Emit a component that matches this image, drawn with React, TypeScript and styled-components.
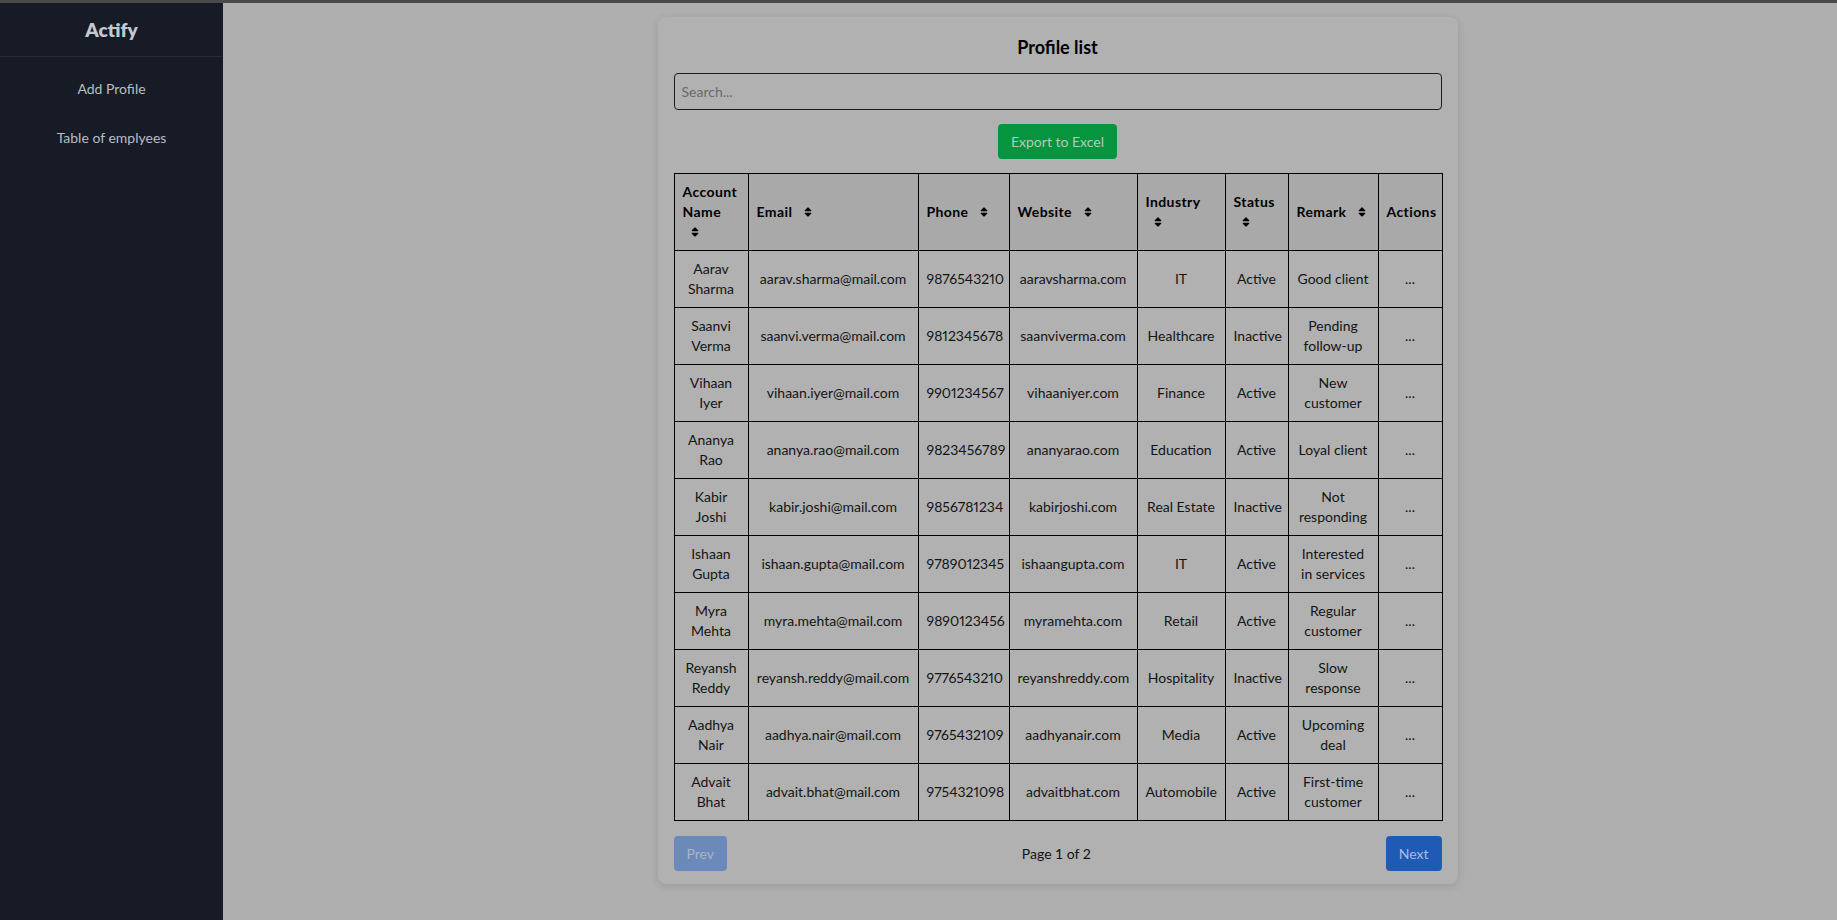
import React from "react";
import styled, { createGlobalStyle } from "styled-components";
import { FaSort } from "react-icons/fa";

const GlobalStyle = createGlobalStyle`
  html, body { margin: 0; padding: 0; }
  body {
    font-family: Lato, "Noto Sans", sans-serif;
    background: #afafaf;
    color: #111;
  }
  * { box-sizing: border-box; }
`;

const TopStrip = styled.div`
  height: 3px;
  background: #4a4a4a;
`;

const Layout = styled.div`
  display: flex;
  min-height: 917px;
`;

const Sidebar = styled.aside`
  width: 223px;
  flex-shrink: 0;
  background: #161b26;
  display: flex;
  flex-direction: column;
`;

const Brand = styled.div`
  height: 54px;
  display: flex;
  align-items: center;
  justify-content: center;
  font-size: 19px;
  font-weight: 800;
  color: #c5c8ce;
  border-bottom: 1px solid #272d38;
`;

const NavList = styled.nav`
  display: flex;
  flex-direction: column;
  align-items: center;
  padding-top: 22px;
  gap: 29px;
`;

const NavItem = styled.a`
  font-size: 14px;
  line-height: 20px;
  color: #b9bdc4;
  text-decoration: none;
`;

const Main = styled.main`
  flex: 1;
  display: flex;
  justify-content: center;
  align-items: flex-start;
  padding: 14px 0 0 55px;
`;

const Card = styled.section`
  width: 800px;
  background: #b1b1b1;
  border-radius: 8px;
  box-shadow: 0 2px 8px rgba(0, 0, 0, 0.12);
  padding: 16px 16px 13px;
  display: flex;
  flex-direction: column;
`;

const Title = styled.h2`
  margin: 0 0 12px;
  text-align: center;
  font-size: 18px;
  line-height: 28px;
  font-weight: 700;
  color: #000;
`;

const SearchInput = styled.input`
  height: 37px;
  width: 100%;
  border: 1px solid #1b1b1b;
  border-radius: 4px;
  background: transparent;
  padding: 0 7px;
  font-family: inherit;
  font-size: 14px;
  color: #111;
  outline: none;
  margin-bottom: 14px;
  &::placeholder { color: #6a6a6a; }
`;

const ExportRow = styled.div`
  display: flex;
  justify-content: center;
  margin-bottom: 14px;
`;

const Button = styled.button<{ $tone: "green" | "blue" | "disabled" }>`
  height: 35px;
  border: none;
  border-radius: 4px;
  padding: 0 13px;
  font-family: inherit;
  font-size: 14px;
  cursor: pointer;
  background: ${(p) =>
    p.$tone === "green" ? "#07943f" : p.$tone === "blue" ? "#1f5bb5" : "#6b8aba"};
  color: ${(p) =>
    p.$tone === "green" ? "#b3cbbb" : p.$tone === "blue" ? "#a8bddb" : "#a9b5c8"};
`;

const Table = styled.table`
  width: 100%;
  table-layout: fixed;
  border-collapse: collapse;
  border: 1px solid #000;
  font-size: 14px;
  line-height: 20px;
`;

const HeadCell = styled.th`
  border: 1px solid #000;
  background: #a9a9aa;
  padding: 8px;
  text-align: left;
  vertical-align: middle;
  font-weight: 700;
  letter-spacing: 0.4px;
  color: #000;
`;

const SortIcon = styled(FaSort)`
  margin-left: 8px;
  width: 8px;
  height: 12px;
  vertical-align: -1px;
`;

const Cell = styled.td<{ $nowrap?: boolean; $digits?: boolean }>`
  border: 1px solid #000;
  padding: 8px;
  text-align: center;
  vertical-align: middle;
  color: #141414;
  white-space: ${(p) => (p.$nowrap ? "nowrap" : "normal")};
  font-variant-numeric: ${(p) => (p.$digits ? "proportional-nums" : "normal")};
`;

const Pager = styled.div`
  display: flex;
  justify-content: space-between;
  align-items: center;
  margin-top: 15px;
`;

const PageLabel = styled.span`
  font-size: 14px;
  color: #111;
`;

type Row = {
  name: string;
  email: string;
  phone: string;
  website: string;
  industry: string;
  status: string;
  remark: string;
};

const rows: Row[] = [
  { name: "Aarav Sharma", email: "aarav.sharma@mail.com", phone: "9876543210", website: "aaravsharma.com", industry: "IT", status: "Active", remark: "Good client" },
  { name: "Saanvi Verma", email: "saanvi.verma@mail.com", phone: "9812345678", website: "saanviverma.com", industry: "Healthcare", status: "Inactive", remark: "Pending follow-up" },
  { name: "Vihaan Iyer", email: "vihaan.iyer@mail.com", phone: "9901234567", website: "vihaaniyer.com", industry: "Finance", status: "Active", remark: "New customer" },
  { name: "Ananya Rao", email: "ananya.rao@mail.com", phone: "9823456789", website: "ananyarao.com", industry: "Education", status: "Active", remark: "Loyal client" },
  { name: "Kabir Joshi", email: "kabir.joshi@mail.com", phone: "9856781234", website: "kabirjoshi.com", industry: "Real Estate", status: "Inactive", remark: "Not responding" },
  { name: "Ishaan Gupta", email: "ishaan.gupta@mail.com", phone: "9789012345", website: "ishaangupta.com", industry: "IT", status: "Active", remark: "Interested in services" },
  { name: "Myra Mehta", email: "myra.mehta@mail.com", phone: "9890123456", website: "myramehta.com", industry: "Retail", status: "Active", remark: "Regular customer" },
  { name: "Reyansh Reddy", email: "reyansh.reddy@mail.com", phone: "9776543210", website: "reyanshreddy.com", industry: "Hospitality", status: "Inactive", remark: "Slow response" },
  { name: "Aadhya Nair", email: "aadhya.nair@mail.com", phone: "9765432109", website: "aadhyanair.com", industry: "Media", status: "Active", remark: "Upcoming deal" },
  { name: "Advait Bhat", email: "advait.bhat@mail.com", phone: "9754321098", website: "advaitbhat.com", industry: "Automobile", status: "Active", remark: "First-time customer" },
];

const columns: { label: string; width: number; sortable: boolean }[] = [
  { label: "Account Name", width: 74, sortable: true },
  { label: "Email", width: 170, sortable: true },
  { label: "Phone", width: 91, sortable: true },
  { label: "Website", width: 128, sortable: true },
  { label: "Industry", width: 88, sortable: true },
  { label: "Status", width: 63, sortable: true },
  { label: "Remark", width: 90, sortable: true },
  { label: "Actions", width: 64, sortable: false },
];

export default function App() {
  return (
    <>
      <GlobalStyle />
      <TopStrip />
      <Layout>
        <Sidebar>
          <Brand>Actify</Brand>
          <NavList>
            <NavItem>Add Profile</NavItem>
            <NavItem>Table of emplyees</NavItem>
          </NavList>
        </Sidebar>
        <Main>
          <Card>
            <Title>Profile list</Title>
            <SearchInput placeholder="Search..." />
            <ExportRow>
              <Button $tone="green">Export to Excel</Button>
            </ExportRow>
            <Table>
              <colgroup>
                {columns.map((c) => (
                  <col key={c.label} style={{ width: c.width }} />
                ))}
              </colgroup>
              <thead>
                <tr>
                  {columns.map((c) => (
                    <HeadCell key={c.label}>
                      {c.label}
                      {c.sortable && (
                        <>
                          {" "}
                          <SortIcon />
                        </>
                      )}
                    </HeadCell>
                  ))}
                </tr>
              </thead>
              <tbody>
                {rows.map((r) => (
                  <tr key={r.email}>
                    <Cell>{r.name}</Cell>
                    <Cell $nowrap>{r.email}</Cell>
                    <Cell $nowrap $digits>{r.phone}</Cell>
                    <Cell $nowrap>{r.website}</Cell>
                    <Cell>{r.industry}</Cell>
                    <Cell>{r.status}</Cell>
                    <Cell>{r.remark}</Cell>
                    <Cell>...</Cell>
                  </tr>
                ))}
              </tbody>
            </Table>
            <Pager>
              <Button $tone="disabled" disabled>
                Prev
              </Button>
              <PageLabel>Page 1 of 2</PageLabel>
              <Button $tone="blue">Next</Button>
            </Pager>
          </Card>
        </Main>
      </Layout>
    </>
  );
}
